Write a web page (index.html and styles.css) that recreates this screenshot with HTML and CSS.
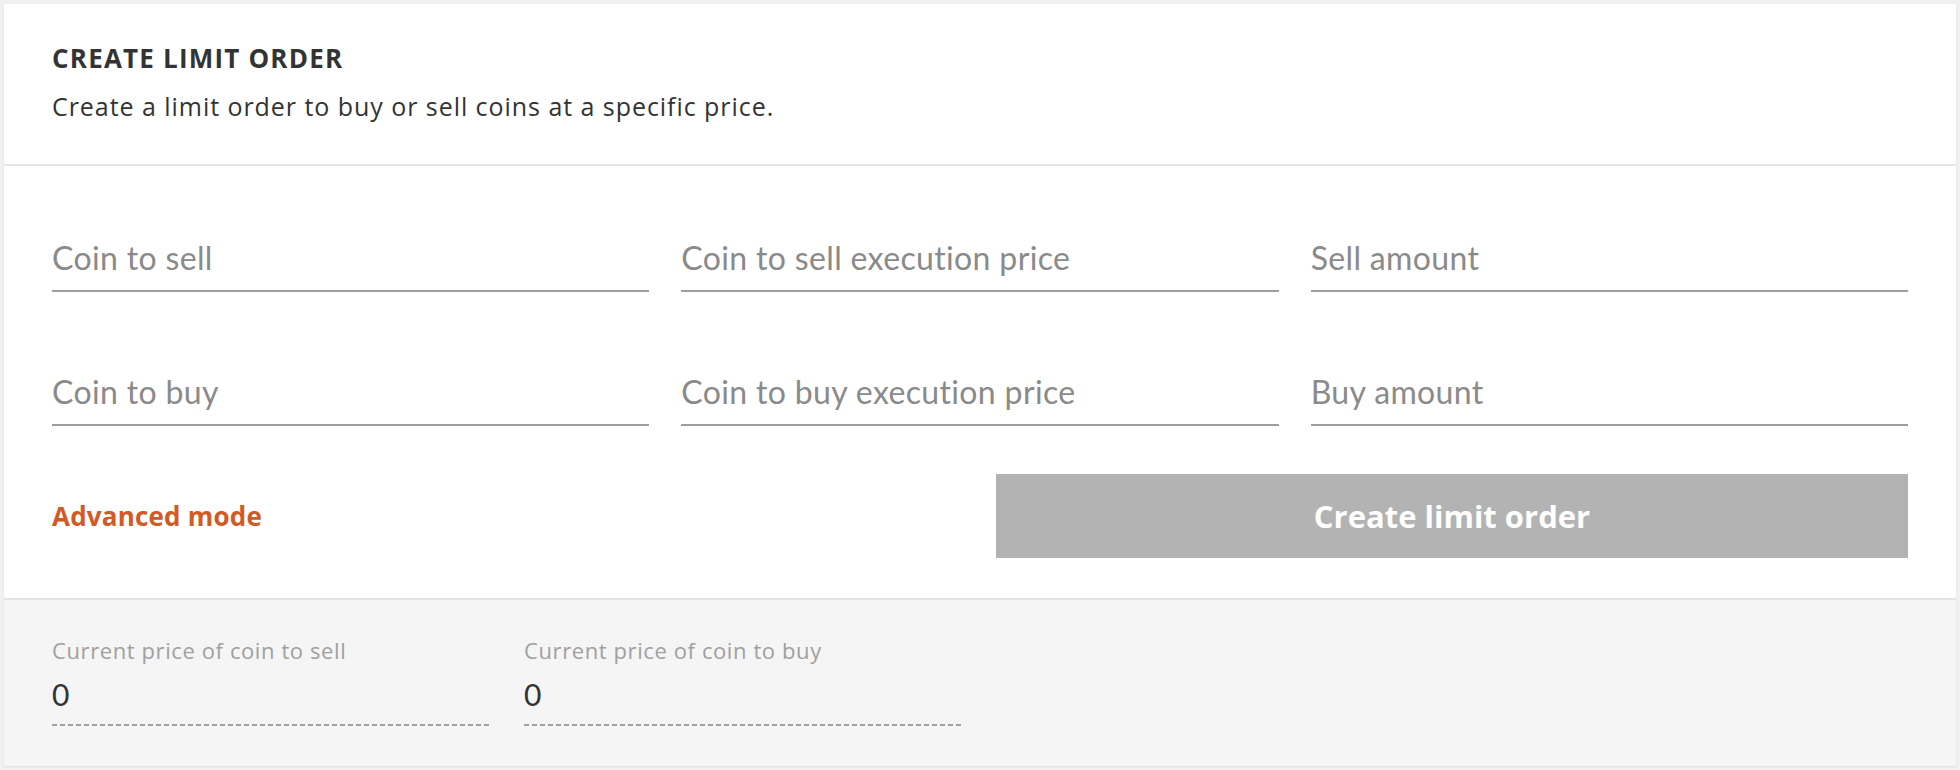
FILE: index.html
```html
<!DOCTYPE html>
<html lang="en">
<head>
<meta charset="utf-8">
<title>Create limit order</title>
<link rel="stylesheet" href="styles.css">
</head>
<body>
<div class="card">
  <div class="card-header">
    <h1 class="title">CREATE LIMIT ORDER</h1>
    <p class="subtitle">Create a limit order to buy or sell coins at a specific price.</p>
  </div>
  <div class="card-body">
    <div class="fields">
      <div class="field"><span class="field-label">Coin to sell</span></div>
      <div class="field"><span class="field-label">Coin to sell execution price</span></div>
      <div class="field"><span class="field-label">Sell amount</span></div>
      <div class="field"><span class="field-label">Coin to buy</span></div>
      <div class="field"><span class="field-label">Coin to buy execution price</span></div>
      <div class="field"><span class="field-label">Buy amount</span></div>
    </div>
    <div class="actions">
      <a class="advanced">Advanced mode</a>
      <button class="submit" type="button">Create limit order</button>
    </div>
  </div>
  <div class="card-footer">
    <div class="info">
      <div class="info-label">Current price of coin to sell</div>
      <div class="info-value">0</div>
    </div>
    <div class="info">
      <div class="info-label">Current price of coin to buy</div>
      <div class="info-value">0</div>
    </div>
  </div>
</div>
</body>
</html>
```
FILE: styles.css
```css
html, body {
  margin: 0;
  padding: 0;
}
body {
  background: #f1f1f1;
  font-family: "Open Sans", "Lato", sans-serif;
  color: #333;
  padding: 4px;
  height: 770px;
  box-sizing: border-box;
}
.card {
  background: #fff;
  box-shadow: 0 1px 2px rgba(0, 0, 0, 0.08);
}
.card-header {
  padding: 38px 48px 42px;
  border-bottom: 2px solid #e6e6e6;
}
.title {
  margin: 0;
  font-size: 26px;
  line-height: 32px;
  font-weight: 700;
  letter-spacing: 1.2px;
  color: #333;
}
.subtitle {
  margin: 16px 0 0;
  font-size: 25px;
  line-height: 32px;
  letter-spacing: 0.95px;
  color: #333;
}
.card-body {
  padding: 72px 48px 40px;
  border-bottom: 2px solid #e4e4e4;
}
.fields {
  display: grid;
  grid-template-columns: repeat(3, 1fr);
  column-gap: 32px;
  row-gap: 80px;
}
.field {
  padding-bottom: 12px;
  border-bottom: 2px solid #9e9e9e;
}
.field-label {
  display: block;
  font-family: "Lato", "Open Sans", sans-serif;
  font-size: 32px;
  line-height: 40px;
  letter-spacing: 0.35px;
  color: #8a8a8a;
}
.actions {
  display: grid;
  grid-template-columns: 1fr 1fr;
  column-gap: 32px;
  align-items: center;
  margin-top: 48px;
}
.advanced {
  font-size: 26px;
  font-weight: 700;
  letter-spacing: 0.2px;
  color: #d25a24;
  cursor: pointer;
}
.submit {
  height: 84px;
  border: 0;
  background: #b3b3b3;
  color: #fff;
  font-family: inherit;
  font-size: 31px;
  font-weight: 700;
}
.card-footer {
  background: #f5f5f5;
  padding: 36px 48px 40px;
  display: grid;
  grid-template-columns: repeat(4, 1fr);
  column-gap: 32px;
}
.info-label {
  font-size: 22px;
  line-height: 28px;
  letter-spacing: 0.6px;
  color: #a0a0a0;
}
.info-value {
  margin-top: 12px;
  font-family: "Lato", "Open Sans", sans-serif;
  font-size: 30px;
  line-height: 36px;
  color: #333;
  background-image: repeating-linear-gradient(90deg, #a0a0a0 0 5px, transparent 5px 8px);
  background-size: 100% 2px;
  background-repeat: no-repeat;
  background-position: left bottom;
  padding-bottom: 14px;
}
```
